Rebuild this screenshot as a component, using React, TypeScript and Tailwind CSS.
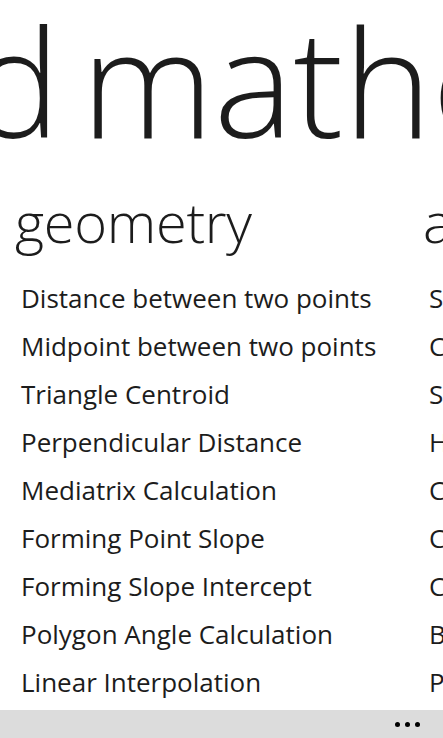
import React from 'react';

const geometry = [
  'Distance between two points',
  'Midpoint between two points',
  'Triangle Centroid',
  'Perpendicular Distance',
  'Mediatrix Calculation',
  'Forming Point Slope',
  'Forming Slope Intercept',
  'Polygon Angle Calculation',
  'Linear Interpolation',
];

const algebra = [
  'Square Root',
  'Cubic Root',
  'Simultaneous Equations',
  'Highest Common Factor',
  'Common Multiple',
  'Cubic Equation',
  'Complex Numbers',
  'Binomial Expansion',
  'Percentage',
];

function Section({ title, items }: { title: string; items: string[] }) {
  return (
    <div className="w-[408px] shrink-0 flex flex-col">
      <div className="pl-[15px] text-[56px] leading-[56px] font-light tracking-[-0.3px] whitespace-nowrap">
        {title}
      </div>
      <div className="mt-[25px] flex flex-col">
        {items.map((item) => (
          <div
            key={item}
            className="pl-[21px] h-[48px] leading-[48px] text-[26px] whitespace-nowrap"
          >
            {item}
          </div>
        ))}
      </div>
    </div>
  );
}

export default function App() {
  return (
    <div
      className="w-[443px] h-[738px] bg-white text-[#1c1c1c] overflow-hidden flex flex-col"
      style={{ fontFamily: '"Open Sans", "Noto Sans", sans-serif' }}
    >
      <div className="pt-[5px] h-[155px] whitespace-nowrap text-[150px] leading-[150px] font-light ml-[-29px]">
        <span className="inline-block mr-[-18px]">d</span> mathcalc
      </div>
      <div className="mt-[38px] flex">
        <Section title="geometry" items={geometry} />
        <Section title="algebra" items={algebra} />
      </div>
      <div className="mt-auto h-[28px] bg-[#dcdcdc] flex items-center justify-end gap-[5px] pr-[23px]">
        <span className="w-[5px] h-[5px] rounded-full bg-black" />
        <span className="w-[5px] h-[5px] rounded-full bg-black" />
        <span className="w-[5px] h-[5px] rounded-full bg-black" />
      </div>
    </div>
  );
}
